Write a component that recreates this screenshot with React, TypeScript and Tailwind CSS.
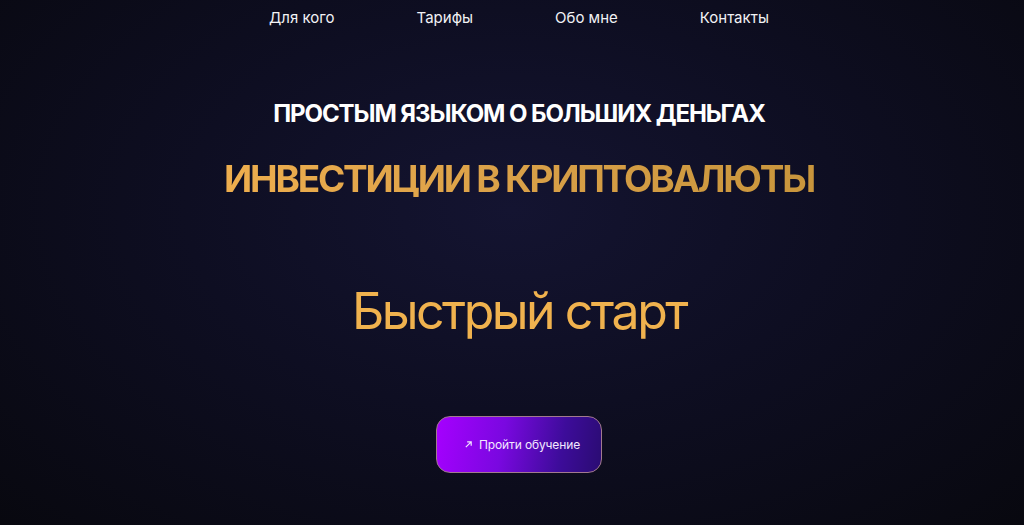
const navItems = ["Для кого", "Тарифы", "Обо мне", "Контакты"];

export default function App() {
  return (
    <div
      className="relative min-h-[525px] w-full overflow-hidden bg-[#0a0a14] text-white"
      style={{ fontFamily: "Inter, 'Noto Sans', sans-serif" }}
    >
      {/* soft navy glow in the middle */}
      <div className="pointer-events-none absolute inset-0 bg-[radial-gradient(ellipse_at_50%_40%,#141431_0%,#0e0e22_45%,#08080f_100%)]" />

      <div className="relative flex flex-col items-center pl-[14px]">
        <nav className="flex h-[35px] items-center gap-[82px] text-[15px] text-[#f2f2f5]">
          {navItems.map((item) => (
            <a key={item} href="#" className="leading-none">
              {item}
            </a>
          ))}
        </nav>

        <h2 className="mt-[67px] text-[24px] font-bold leading-none tracking-[-0.045em] text-white">
          ПРОСТЫМ ЯЗЫКОМ О БОЛЬШИХ ДЕНЬГАХ
        </h2>

        <h1 className="mt-[34px] bg-[linear-gradient(90deg,#eeae4e_0%,#d9a048_50%,#c8953c_100%)] bg-clip-text text-[37px] font-bold leading-none tracking-[-0.06em] text-transparent">
          ИНВЕСТИЦИИ В КРИПТОВАЛЮТЫ
        </h1>

        <div className="mt-[89px] text-[50px] font-normal leading-none tracking-[-0.05em] text-[#f0b24e]">
          Быстрый старт
        </div>

        <button className="mt-[80px] flex h-[57px] w-[166px] items-center justify-center gap-[6px] rounded-[14px] border border-[#a27a8e] bg-[linear-gradient(100deg,#a600ff_0%,#7a08e0_40%,#3d0c9a_75%,#2a0c72_100%)] pl-[6px] text-[12px] tracking-[-0.01em] text-[#f3e8ff]">
          <svg width="9" height="9" viewBox="0 0 10 10" fill="none">
            <path d="M2 8L8 2M3.5 2H8V6.5" stroke="currentColor" strokeWidth="1.3" />
          </svg>
          <span>Пройти обучение</span>
        </button>
      </div>
    </div>
  );
}
